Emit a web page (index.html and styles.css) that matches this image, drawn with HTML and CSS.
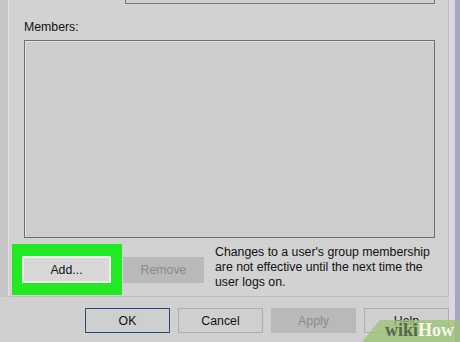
FILE: index.html
```html
<!DOCTYPE html>
<html lang="en">
<head>
    <meta charset="UTF-8">
    <title>Group Properties</title>
    <link rel="stylesheet" href="styles.css">
</head>
<body>
    <div class="window">
        <div class="gutter"></div>
        <div class="main">
            <div class="tab-page">
                <div class="top-field"></div>
                <div class="label">Members:</div>
                <div class="member-list"></div>
                <div class="member-actions">
                    <div class="highlight">
                        <button class="btn btn-add">Add...</button>
                    </div>
                    <button class="btn btn-disabled btn-remove">Remove</button>
                    <p class="note">Changes to a user's group membership<br>are not effective until the next time the<br>user logs on.</p>
                </div>
            </div>
            <div class="dialog-buttons">
                <button class="btn btn-default">OK</button>
                <button class="btn">Cancel</button>
                <button class="btn btn-disabled">Apply</button>
                <button class="btn">Help</button>
            </div>
        </div>
        <div class="frame-edge"></div>
    </div>

    <div class="watermark">
        <svg width="98" height="22" viewBox="0 0 98 22">
            <polygon points="18,0 98,0 98,22 0,22" fill="#9cc276" fill-opacity="0.78"/>
        </svg>
        <span class="wm-text"><span class="wm-wiki">wiki</span>How</span>
    </div>
</body>
</html>
```

FILE: styles.css
```css
body {
    margin: 0;
    width: 460px;
    height: 342px;
    overflow: hidden;
    background-color: #d0d0d0;
    font-family: "Liberation Sans", Arial, sans-serif;
    font-size: 12.3px;
    color: #111;
    position: relative;
}
.window {
    display: flex;
    height: 342px;
}
.gutter {
    width: 8px;
    height: 297px;
    background-color: #c6c6c6;
}
.main {
    width: 441px;
}
.tab-page {
    height: 296px;
    border-left: 1px solid #dedede;
    border-right: 1px solid #bdbdbd;
    border-bottom: 1px solid #bdbdbd;
    background-color: #d2d2d2;
    padding: 0 13px 0 15px;
}
.top-field {
    height: 3px;
    margin-left: 101px;
    border: 1px solid #777;
    border-top: none;
    background-color: #d0d0d0;
}
.label {
    margin-top: 16px;
    line-height: 15px;
    font-size: 12.3px;
}
.member-list {
    margin-top: 5px;
    height: 196px;
    border: 1px solid #6f6f6f;
    box-shadow: inset 1px 1px 0 #e2e2e2;
    background-color: #cdcdcd;
}
.member-actions {
    display: flex;
    align-items: flex-start;
    margin-left: -12px;
    margin-top: 6px;
}
.highlight {
    background-color: #22ea22;
    padding: 12px 11px 12px 10px;
}
.btn {
    font-family: "Liberation Sans", Arial, sans-serif;
    font-size: 12.3px;
    color: #111;
    width: 86px;
    height: 25px;
    padding: 0;
    margin: 0;
    border: 1px solid #adadad;
    background-color: #cfcfcf;
}
.btn-add {
    width: 89px;
    height: 27px;
    border: 2px solid #f2f2f2;
    background-color: #d8d8d8;
}
.btn-remove {
    width: 81px;
    height: 26px;
    margin-top: 13px;
    margin-left: 1px;
}
.btn-disabled {
    background-color: #b9b9b9;
    border-color: #b9b9b9;
    color: #8a8a8a;
}
.note {
    margin: 1px 0 0 11px;
    line-height: 15px;
}
.dialog-buttons {
    display: flex;
    gap: 8px;
    margin-top: 11px;
    margin-left: 77px;
}
.btn-default {
    border: 1px solid #2c4a86;
    width: 86px;
}
.frame-edge {
    width: 11px;
    background: linear-gradient(to right, #dadada 0, #dadada 6px, #a3a6c6 6px);
}
.watermark {
    position: absolute;
    left: 362px;
    top: 320px;
    width: 98px;
    height: 22px;
}
.watermark svg {
    display: block;
}
.wm-text {
    position: absolute;
    left: 23px;
    top: 0;
    font-family: "Liberation Serif", "Times New Roman", serif;
    font-weight: bold;
    font-size: 18px;
    line-height: 20px;
    color: #f4f8ee;
}
.wm-wiki {
    color: #55654a;
}
```
